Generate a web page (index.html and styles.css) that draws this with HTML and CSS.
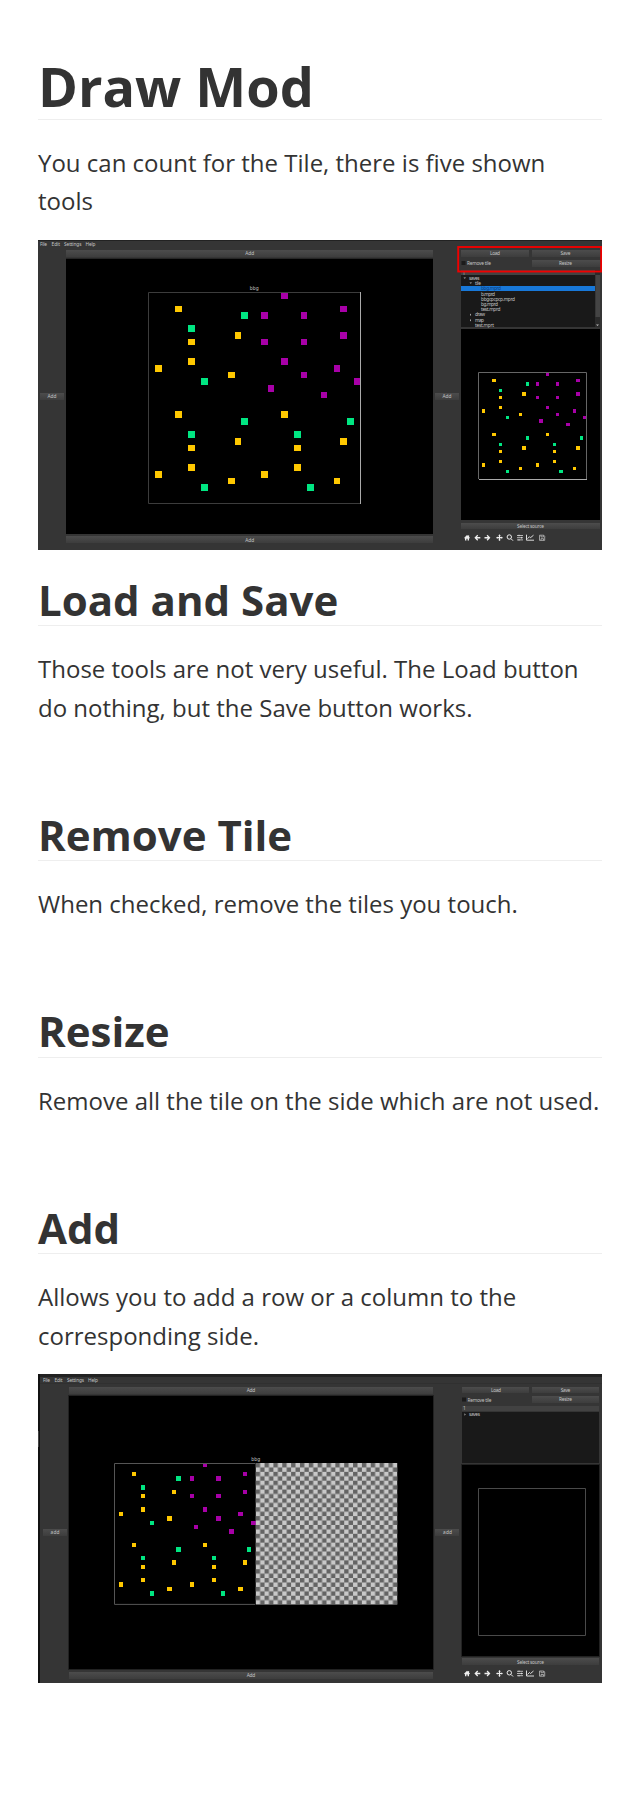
FILE: index.html
```
<!DOCTYPE html>
<html lang="en">
<head>
<meta charset="utf-8">
<title>Draw Mod</title>
<link rel="stylesheet" href="styles.css">
</head>
<body>
<svg class="defs" width="0" height="0" aria-hidden="true">
  <defs>
    <linearGradient id="btn" x1="0" y1="0" x2="0" y2="1"><stop offset="0" stop-color="#4c4c4c"/><stop offset="1" stop-color="#3d3d3d"/></linearGradient>
    <pattern id="checks" width="2" height="2" patternUnits="userSpaceOnUse"><path fill="#c8c8c8" d="M0 0h2v2H0z"/><path fill="#646464" d="M0 0h1v1H0zM1 1h1v1H1z"/></pattern>
    <!-- 32 x 32 tile map -->
    <g id="tiles">
      <path fill="#ffc800" d="M4 2h1v1h-1zM6 7h1v1h-1zM13 6h1v1h-1zM6 10h1v1h-1zM1 11h1v1h-1zM12 12h1v1h-1zM4 18h1v1h-1zM13 22h1v1h-1zM6 23h1v1h-1zM6 26h1v1h-1zM1 27h1v1h-1zM12 28h1v1h-1zM20 18h1v1h-1zM29 22h1v1h-1zM22 23h1v1h-1zM22 26h1v1h-1zM17 27h1v1h-1zM28 28h1v1h-1z"/>
      <path fill="#00e682" d="M14 3h1v1h-1zM6 5h1v1h-1zM8 13h1v1h-1zM14 19h1v1h-1zM6 21h1v1h-1zM8 29h1v1h-1zM30 19h1v1h-1zM22 21h1v1h-1zM24 29h1v1h-1z"/>
      <path fill="#a800a8" d="M20 0h1v1h-1zM29 2h1v1h-1zM17 3h1v1h-1zM23 3h1v1h-1zM29 6h1v1h-1zM17 7h1v1h-1zM23 7h1v1h-1zM20 10h1v1h-1zM28 11h1v1h-1zM23 12h1v1h-1zM31 13h1v1h-1zM18 14h1v1h-1zM26 15h1v1h-1z"/>
    </g>
    <!-- plot toolbar, centred on y = 0 -->
    <g id="toolbar" fill="#eee" stroke="#eee" stroke-width="0">
      <path d="M464 .2L467 -2.8l1.2 1.1v-.8h.9v1.7l1 1-.6.6-.5-.4v2.4h-1.4V1h-1.2v1.8H465V.4l-.5.4z"/>
      <path d="M474.4 0l2.9-2.9.9.9-1.2 1.3h3.3V.8H477l1.2 1.3-.9.9z"/>
      <path d="M490.4 0l-2.9-2.9-.9.9 1.2 1.3h-3.3V.8h3.3l-1.2 1.3.9.9z"/>
      <path d="M499.5-3.4l1.3 1.4h-.7v1.4h1.4v-.7L502.9 0l-1.4 1.3V.6h-1.4V2h.7l-1.3 1.4L498.200 2h.7V.6h-1.4v.7L496.100 0l1.4-1.300v.7h1.4V-2h-.7z"/>
      <path fill="none" stroke-width="1" d="M509.300-2.900a2.200 2.200 0 1 1 0 4.400a2.200 2.200 0 1 1 0-4.400M511 1l2 2"/>
      <path fill="none" stroke-width=".7" d="M517-2.200h6M517 0h6M517 2.200h6M519-3v1.600M521.500-.8v1.600M519 1.400V3"/>
      <path fill="none" stroke-width=".9" d="M526.500-3v5.500h7.500M527.500 1l2-2 1 1 3-2.500"/>
      <path fill="none" stroke="#aaa" stroke-width=".9" d="M539.500-2.500h4.200l1 1v4.200h-5.200zM541-2.500v1.700h2.500v-1.700M541 2.700V1h2.500v1.700"/>
    </g>
  </defs>
</svg>
<main class="doc">
  <h1>Draw Mod</h1>
  <p>You can count for the Tile, there is five shown tools</p>
  <svg class="shot" viewBox="38 240 564 310" height="310">
    <path fill="#353535" d="M38 240h564v310H38z"/>
    <path fill="#222" d="M38 240h564v1H38z"/>
    <g class="label">
      <text x="40" y="245.700" textLength="7">File</text><text x="51.500" y="245.700" textLength="8.500">Edit</text><text x="64" y="245.700" textLength="17.500">Settings</text><text x="85.500" y="245.700" textLength="10">Help</text>
    </g>
    <path fill="#262626" d="M66 258h367v1H66z"/>
    <path d="M66 259h367v275H66z"/>
    <g fill="url(#btn)">
      <rect x="66" y="250" width="367" height="7"/><rect x="66" y="536" width="367" height="7"/>
      <rect x="40" y="393" width="24" height="7"/><rect x="435" y="393" width="24" height="7"/>
      <rect x="461" y="250" width="68" height="7"/><rect x="532" y="250" width="68" height="7"/>
      <rect x="532" y="260" width="68" height="7"/><rect x="461" y="523" width="139" height="6"/>
    </g>
    <g class="label mid">
      <text x="249.700" y="255.400" textLength="9">Add</text><text x="249.700" y="541.600" textLength="9">Add</text>
      <text x="52" y="398.200" textLength="9">Add</text><text x="447" y="398.200" textLength="9">Add</text>
      <text x="495" y="255.400" textLength="10">Load</text><text x="565.500" y="255.400" textLength="10">Save</text>
      <text x="565.500" y="265" textLength="13">Resize</text><text x="530.500" y="528" textLength="27">Select source</text>
      <text x="254.300" y="290" textLength="9">bbg</text>
    </g>
    <path fill="#1b1b1b" d="M461.500 261h4v4h-4z"/>
    <text class="label" x="467" y="265" textLength="24">Remove tile</text>
    <path fill="#424242" d="M461 270h134v5h-134z"/>
    <path fill="#191919" d="M461 275h134v52h-134z"/>
    <path fill="#2a2a2a" d="M595 270h5v57h-5z"/><path fill="#444" d="M595.500 275h4.500v42h-4.500z"/>
    <path fill="#1878d8" d="M461 286h134v5h-134z"/>
    <g class="label">
      <text x="469" y="280" textLength="10.500">saves</text><text x="475" y="285" textLength="6">tile</text>
      <text x="481" y="290" textLength="20" class="picked">bbg.mprd</text><text x="481" y="295.600" textLength="14">b.mprd</text>
      <text x="481" y="300.600" textLength="34">bbgcpcpcp.mprd</text><text x="481" y="306" textLength="17">bg.mprd</text>
      <text x="481" y="311.300" textLength="19.500">test.mprd</text><text x="475" y="316.200" textLength="10">draw</text>
      <text x="475" y="321.800" textLength="9">map</text><text x="475" y="326.900" textLength="19">test.mprt</text>
      <text x="462.500" y="274.600">1</text>
    </g>
    <path fill="#bbb" d="M463.500 277.500h2.500l-1.250 1.300zM469.500 282.500h2.500l-1.250 1.300zM470 313.500v2.400l1.200-1.200zM470 319v2.400l1.200-1.200zM596 324.500h3l-1.500 1.500z"/>
    <path d="M461 329h139v191H461z"/>
    <g shape-rendering="crispEdges">
      <use href="#tiles" transform="translate(148.500 292.300) scale(6.620)"/>
      <use href="#tiles" transform="translate(478.700 372.300) scale(3.365)"/>
    </g>
    <path fill="none" stroke="#3c3c3c" d="M360 292.500H148.500V503.500H360"/><path stroke="#aaa" d="M360.500 292v212"/>
    <path fill="none" stroke="#666" d="M586.500 479V372.500H478.500V479"/><path stroke="#aaa" d="M479 479.500h108"/>
    <rect x="458.200" y="247" width="143" height="24.500" fill="none" stroke="#f00000" stroke-width="1.900"/>
    <use href="#toolbar" y="537.700"/>
  </svg>
  <h2>Load and Save</h2>
  <p class="section-end">Those tools are not very useful. The Load button do nothing, but the Save button works.</p>
  <h2>Remove Tile</h2>
  <p class="section-end">When checked, remove the tiles you touch.</p>
  <h2>Resize</h2>
  <p class="section-end">Remove all the tile on the side which are not used.</p>
  <h2>Add</h2>
  <p>Allows you to add a row or a column to the corresponding side.</p>
  <svg class="shot" viewBox="38 1374 564 309" height="309">
    <path fill="#353535" d="M38 1374h564v309H38z"/>
    <path fill="#222" d="M38 1374h564v3H38z"/><path fill="#111" d="M38 1374h2v309h-2z"/>
    <path fill="#454545" d="M38 1431h1v16h-1z"/><path fill="#303030" d="M40 1383h562v1H40z"/>
    <g class="label">
      <text x="43" y="1382" textLength="7">File</text><text x="54.500" y="1382" textLength="8">Edit</text><text x="67" y="1382" textLength="17">Settings</text><text x="88" y="1382" textLength="10">Help</text>
    </g>
    <path fill="#222" d="M68 1395h366v275H68z"/>
    <path d="M69 1396h364v273H69z"/>
    <g fill="url(#btn)">
      <rect x="69" y="1387" width="364" height="7"/><rect x="69" y="1672" width="364" height="7"/>
      <rect x="43" y="1529" width="24" height="7"/><rect x="435" y="1529" width="24" height="7"/>
      <rect x="462" y="1387" width="67" height="6"/><rect x="532" y="1387" width="67" height="6"/>
      <rect x="532" y="1396" width="67" height="7"/><rect x="462" y="1658" width="137" height="7"/>
    </g>
    <g class="label mid">
      <text x="251" y="1391.800" textLength="8.500">Add</text><text x="251" y="1676.900" textLength="8.500">Add</text>
      <text x="55" y="1534.200" textLength="9">add</text><text x="447.500" y="1534.200" textLength="9">add</text>
      <text x="496" y="1391.800" textLength="10">Load</text><text x="565.500" y="1391.800" textLength="9.500">Save</text>
      <text x="565.500" y="1401.400" textLength="13">Resize</text><text x="530.500" y="1663.500" textLength="27">Select source</text>
      <text x="255.700" y="1461" textLength="9">bbg</text>
    </g>
    <path fill="#1b1b1b" d="M462 1397.500h4v4h-4z"/>
    <text class="label" x="467.500" y="1401.500" textLength="24">Remove tile</text>
    <path fill="#424242" d="M462 1406h137v5H462z"/>
    <path fill="#191919" d="M462 1412h137v51H462z"/>
    <g class="label"><text x="463" y="1410.400">1</text><text x="469" y="1416.300" textLength="11">saves</text></g>
    <path fill="#bbb" d="M464.500 1413.300v2.400l1.200-1.200z"/>
    <path fill="#222" d="M461 1464h139v193H461z"/>
    <path d="M462 1465h137v191H462z"/>
    <g shape-rendering="crispEdges">
      <use href="#tiles" transform="translate(114.300 1463) scale(4.425)"/>
    </g>
    <path fill="none" stroke="#555" d="M255 1463.500H114.500v140.900H255"/>
    <rect width="32" height="32" fill="url(#checks)" transform="translate(255.700 1463) scale(4.425)"/>
    <path fill="none" stroke="#4a4a4a" d="M478.500 1488.500h107v147h-107z"/>
    <use href="#toolbar" y="1673.500"/>
  </svg>
</main>
</body>
</html>
```
FILE: styles.css
```
body {
  margin: 0;
  background: #fff;
  color: #333;
  font-family: "Open Sans", sans-serif;
  font-size: 24px;
  line-height: 1.6;
}

.defs {
  display: block;
}

.doc {
  display: flex;
  flex-direction: column;
  padding: 54px 38px 0;
}

h1,
h2 {
  margin: 0 0 24px;
  border-bottom: 1px solid #eee;
  line-height: 1.2;
}

h1 {
  font-size: 54px;
}

h2 {
  font-size: 42px;
}

p {
  margin: 0 0 19px;
}

.section-end {
  margin-bottom: 82.7px;
}

.shot {
  display: block;
  width: 564px;
  margin-bottom: 25.4px;
}

.label {
  fill: #c4c4c4;
  font-family: "Noto Sans", sans-serif;
  font-size: 4.8px;
}

.mid text {
  text-anchor: middle;
}

.label .picked {
  fill: #0d3c78;
}
```
